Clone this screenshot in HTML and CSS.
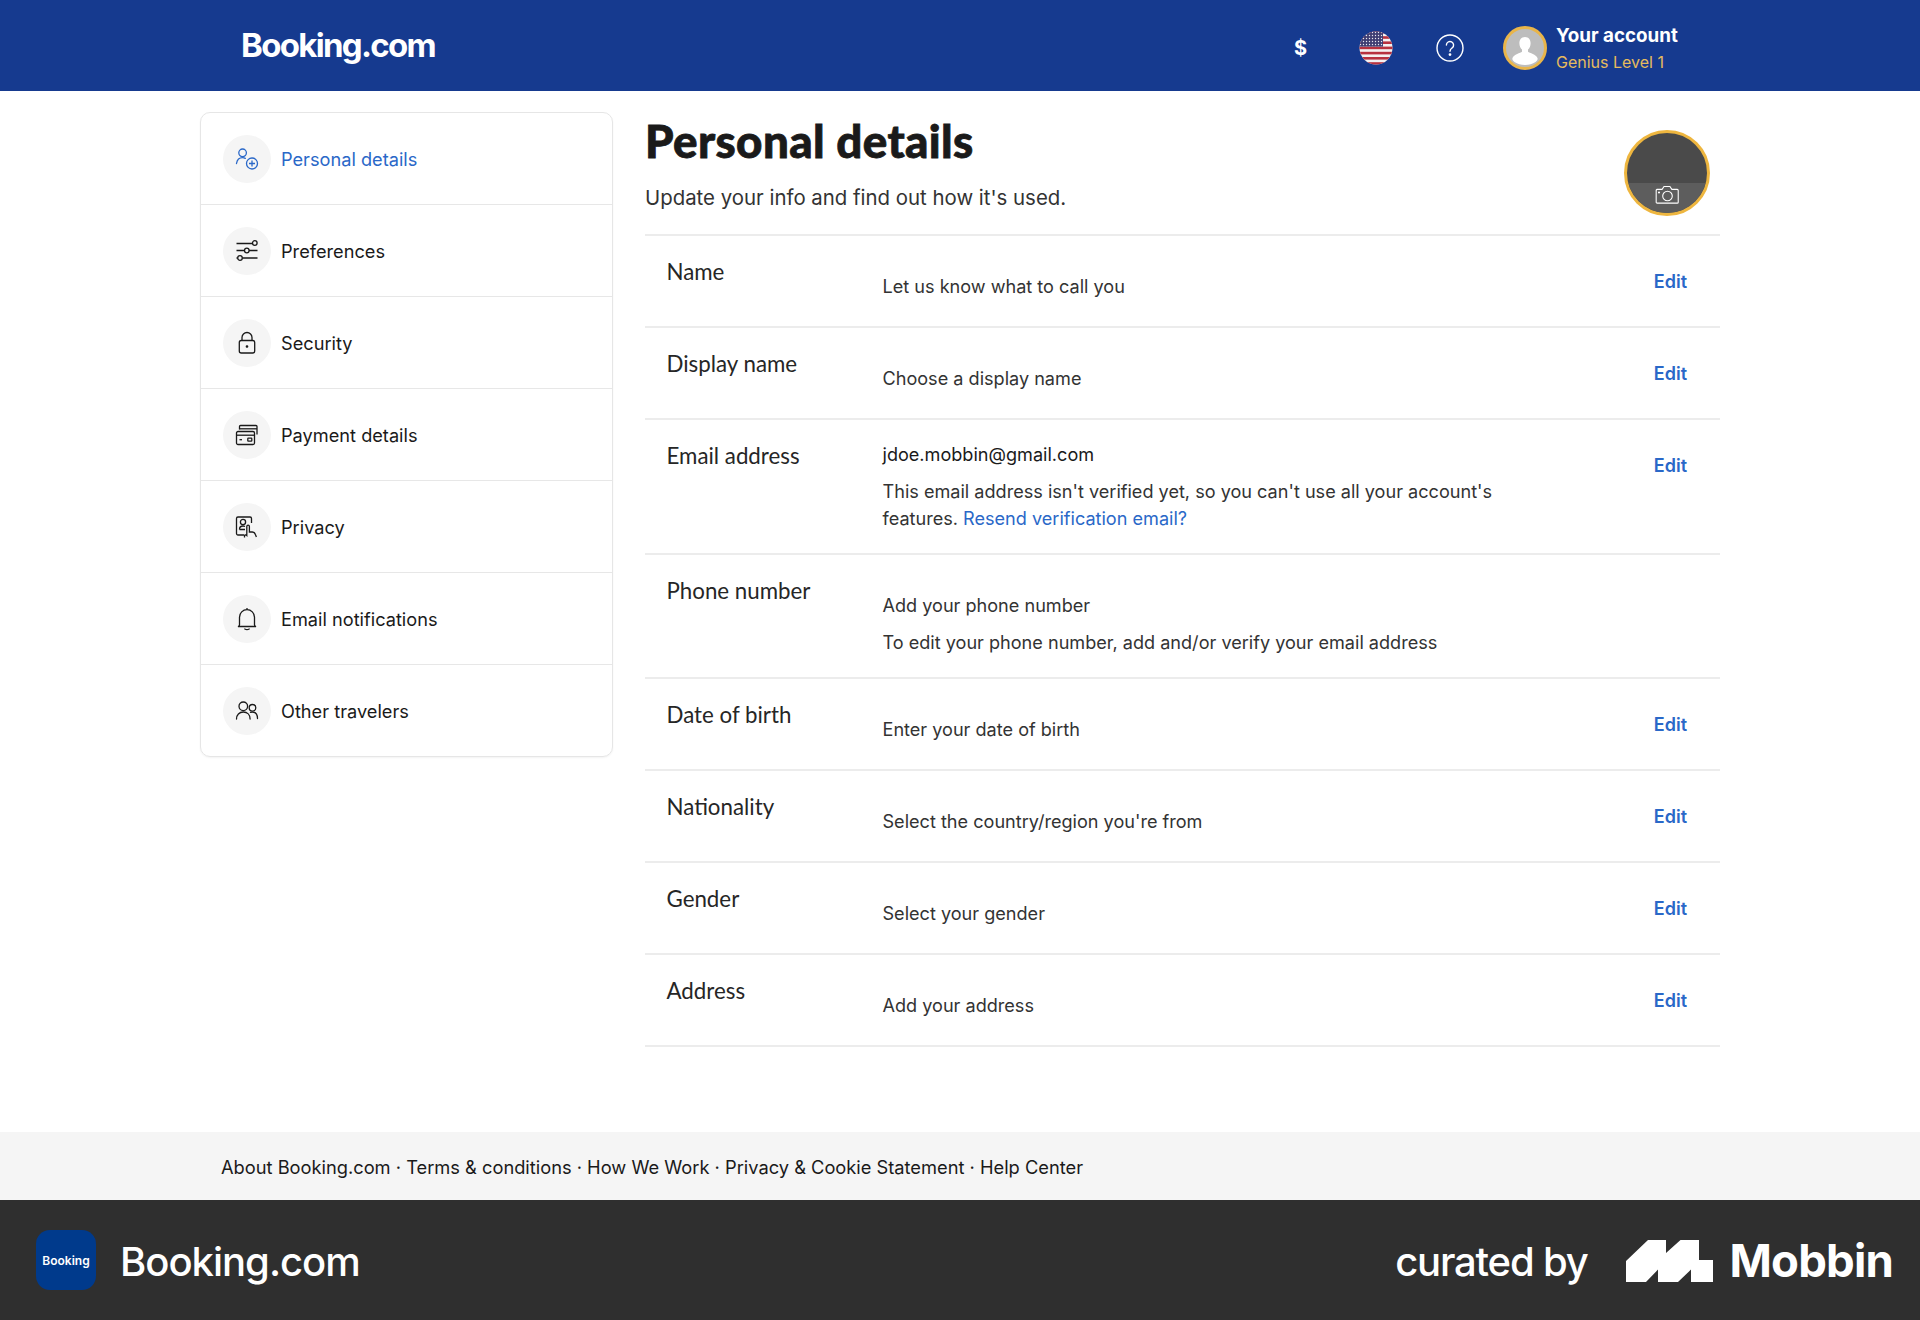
FILE: index.html
```html
<!DOCTYPE html>
<html lang="en">

<head>
    <meta charset="UTF-8">
    <title>Personal details</title>
    <link rel="stylesheet" href="styles.css">
</head>

<body>

<header class="top-bar">
    <div class="page top-inner">
        <a class="logo">Booking.com</a>
        <div class="top-actions">
            <span class="top-item currency">$</span>
            <span class="top-item">
                <svg class="flag" width="34" height="34" viewBox="0 0 34 34">
                    <defs>
                        <clipPath id="flagClip"><circle cx="17" cy="17" r="16.5"/></clipPath>
                        <pattern id="stars" width="3" height="3" patternUnits="userSpaceOnUse">
                            <circle cx="1.5" cy="1.5" r=".7" fill="#e8e8f0"/>
                        </pattern>
                    </defs>
                    <g clip-path="url(#flagClip)">
                        <rect width="34" height="34" fill="#f4f1f1"/>
                        <rect y="0" width="34" height="2.6" fill="#b8323f"/>
                        <rect y="5.2" width="34" height="2.6" fill="#b8323f"/>
                        <rect y="10.4" width="34" height="2.6" fill="#b8323f"/>
                        <rect y="15.6" width="34" height="2.6" fill="#b8323f"/>
                        <rect y="20.8" width="34" height="2.6" fill="#b8323f"/>
                        <rect y="26" width="34" height="2.6" fill="#b8323f"/>
                        <rect y="31.2" width="34" height="2.8" fill="#b8323f"/>
                        <rect width="24" height="15.6" fill="#3f3e72"/>
                        <rect width="24" height="15.6" fill="url(#stars)"/>
                    </g>
                </svg>
            </span>
            <span class="top-item help">
                <svg width="28" height="28" viewBox="0 0 28 28" fill="none" stroke="#fff" stroke-width="1.4">
                    <circle cx="14" cy="14" r="13"/>
                    <path d="M10.4 11a3.6 3.6 0 1 1 5.8 2.9c-1.300 1-2.200 1.600-2.200 3.300" stroke-linecap="round"/>
                    <circle cx="14" cy="20.600" r=".7" fill="#fff"/>
                </svg>
            </span>
            <div class="account">
                <span class="account-pic">
                    <svg width="38" height="38" viewBox="0 0 38 38">
                        <path fill="#fff" d="M19 8c-3.700 0-5.600 2.800-5.600 6.200 0 2.600 1.100 5 2.600 6.300v2.200c-1.500 1.400-8.300 2.500-9.500 6.300-.5 1.600.5 3 2 4 3 2 6.500 3 10.500 3s7.500-1 10.500-3c1.500-1 2.500-2.400 2-4-1.200-3.800-8-4.900-9.500-6.300v-2.200c1.500-1.300 2.600-3.700 2.600-6.300C24.600 10.800 22.700 8 19 8z"/>
                    </svg>
                </span>
                <div class="account-text">
                    <div class="account-name">Your account</div>
                    <div class="account-level">Genius Level 1</div>
                </div>
            </div>
        </div>
    </div>
</header>

<div class="page content">
    <nav class="side-nav">
        <a class="side-item active">
            <span class="side-icon">
                <svg width="24" height="24" viewBox="0 0 24 24" fill="none" stroke="#2a68c8" stroke-width="1.3">
                    <circle cx="7.600" cy="5.800" r="3.800"/>
                    <path d="M1.500 16.500c.6-3.500 3-5.800 6.100-5.800 1 0 1.900.2 2.700.7" stroke-linecap="round"/>
                    <circle cx="17" cy="16.500" r="5.500"/>
                    <path d="M17 13.500v6M14 16.500h6"/>
                </svg>
            </span>
            Personal details
        </a>
        <a class="side-item">
            <span class="side-icon">
                <svg width="24" height="24" viewBox="0 0 24 24" fill="none" stroke="#1a1a1a" stroke-width="1.3">
                    <path d="M1.500 4.500h16.500M1.500 11.500h8M14 11.500h8.500M7.500 19h15M1.500 19h1"/>
                    <circle cx="19.800" cy="4" r="2.300"/>
                    <circle cx="11.800" cy="11.500" r="2.300"/>
                    <circle cx="5" cy="19" r="2.300"/>
                </svg>
            </span>
            Preferences
        </a>
        <a class="side-item">
            <span class="side-icon">
                <svg width="24" height="24" viewBox="0 0 24 24" fill="none" stroke="#1a1a1a" stroke-width="1.3">
                    <rect x="4.300" y="9.500" width="15.400" height="12.500" rx="2"/>
                    <path d="M7 9.500V6.500a5 5 0 0 1 10 0v3"/>
                    <circle cx="12" cy="15.500" r=".7" fill="#1a1a1a"/>
                </svg>
            </span>
            Security
        </a>
        <a class="side-item">
            <span class="side-icon">
                <svg width="24" height="24" viewBox="0 0 24 24" fill="none" stroke="#1a1a1a" stroke-width="1.3">
                    <path d="M4.500 6.500V3.500a1 1 0 0 1 1-1h15.500a1 1 0 0 1 1 1v8"/>
                    <path d="M4.500 5.800h17.500"/>
                    <rect x="1.500" y="8.500" width="18" height="13" rx="1.500"/>
                    <path d="M1.500 12.200h18"/>
                    <rect x="12.800" y="15.200" width="4" height="3" rx=".5"/>
                    <path d="M4.500 16.700h2.500"/>
                </svg>
            </span>
            Payment details
        </a>
        <a class="side-item">
            <span class="side-icon">
                <svg width="24" height="24" viewBox="0 0 24 24" fill="none" stroke="#1a1a1a" stroke-width="1.3">
                    <path d="M9 20H3a1.500 1.500 0 0 1-1.500-1.500V3.500A1.500 1.500 0 0 1 3 2h12a1.500 1.500 0 0 1 1.500 1.500V8"/>
                    <circle cx="8" cy="7" r="2.600"/>
                    <path d="M4.500 14.500c0-2.200 1.500-3.500 3.500-3.500 .8 0 1.500.2 2 .5M4.500 14.500h5.500"/>
                    <path d="M9.500 22.500v-1.500c0-1 1.300-1.500 2.300-.5V11.500a1.300 1.300 0 0 1 2.600 0v5.500h3c1.500 0 2.500 1 3 2.500l1 2.500"/>
                </svg>
            </span>
            Privacy
        </a>
        <a class="side-item">
            <span class="side-icon">
                <svg width="24" height="24" viewBox="0 0 24 24" fill="none" stroke="#1a1a1a" stroke-width="1.3">
                    <path d="M12 1v2.200M4.500 18v-7.800a7.500 7.500 0 0 1 15 0V18c0 .5 1 1.300 1.500 1.500H3c.5-.2 1.500-1 1.500-1.500z"/>
                    <path d="M9.800 22c1.400.8 3 .8 4.400 0" stroke-linecap="round"/>
                </svg>
            </span>
            Email notifications
        </a>
        <a class="side-item">
            <span class="side-icon">
                <svg width="24" height="24" viewBox="0 0 24 24" fill="none" stroke="#1a1a1a" stroke-width="1.3">
                    <circle cx="8.300" cy="7.300" r="4.300"/>
                    <circle cx="17.500" cy="8.800" r="3.300"/>
                    <path d="M1.500 20c0-4.200 2.800-7 6.800-7s6.800 2.800 6.800 7" stroke-linecap="round"/>
                    <path d="M15.500 13.400c.6-.2 1.300-.3 2-.3 2.700 0 4.900 2.300 5 6.400" stroke-linecap="round"/>
                </svg>
            </span>
            Other travelers
        </a>
    </nav>

    <main class="details">
        <div class="details-head">
            <div>
                <h1>Personal details</h1>
                <p class="intro">Update your info and find out how it's used.</p>
            </div>
            <div class="big-pic">
                <span class="big-pic-strip">
                    <svg width="24" height="20" viewBox="0 0 24 20" fill="none" stroke="#fff" stroke-width="1.100">
                        <path d="M1.500 4.500h5.500l2-3h6l2 3h5.500a1 1 0 0 1 1 1v12a1 1 0 0 1-1 1h-20.500a1 1 0 0 1-1-1v-12a1 1 0 0 1 1-1z" transform="translate(.2 0) scale(.98)"/>
                        <circle cx="12.500" cy="11" r="4.800"/>
                        <circle cx="4" cy="7.500" r=".5" fill="#fff"/>
                    </svg>
                </span>
            </div>
        </div>

        <div class="info-row">
            <div class="info-label">Name</div>
            <div class="info-value"><p class="empty">Let us know what to call you</p></div>
            <a class="edit">Edit</a>
        </div>
        <div class="info-row">
            <div class="info-label">Display name</div>
            <div class="info-value"><p class="empty">Choose a display name</p></div>
            <a class="edit">Edit</a>
        </div>
        <div class="info-row">
            <div class="info-label">Email address</div>
            <div class="info-value">
                <p class="filled">jdoe.mobbin@gmail.com</p>
                <p class="note">This email address isn't verified yet, so you can't use all your account's features. <a class="link">Resend verification email?</a></p>
            </div>
            <a class="edit">Edit</a>
        </div>
        <div class="info-row">
            <div class="info-label">Phone number</div>
            <div class="info-value">
                <p class="empty">Add your phone number</p>
                <p class="note">To edit your phone number, add and/or verify your email address</p>
            </div>
        </div>
        <div class="info-row">
            <div class="info-label">Date of birth</div>
            <div class="info-value"><p class="empty">Enter your date of birth</p></div>
            <a class="edit">Edit</a>
        </div>
        <div class="info-row">
            <div class="info-label">Nationality</div>
            <div class="info-value"><p class="empty">Select the country/region you're from</p></div>
            <a class="edit">Edit</a>
        </div>
        <div class="info-row">
            <div class="info-label">Gender</div>
            <div class="info-value"><p class="empty">Select your gender</p></div>
            <a class="edit">Edit</a>
        </div>
        <div class="info-row">
            <div class="info-label">Address</div>
            <div class="info-value"><p class="empty">Add your address</p></div>
            <a class="edit">Edit</a>
        </div>
    </main>
</div>

<footer class="foot-links">
    <div class="page foot-links-inner">About Booking.com · Terms &amp; conditions · How We Work · Privacy &amp; Cookie Statement · Help Center</div>
</footer>

<div class="credit">
    <div class="credit-app">
        <span class="app-icon">Booking</span>
        <span class="app-name">Booking.com</span>
    </div>
    <div class="credit-by">
        <span class="curated">curated by</span>
        <svg class="mobbin-mark" width="87" height="42" viewBox="0 0 87 44" preserveAspectRatio="none">
            <path fill="#fff" d="M0 22L22 0H40V13.500L54.500 0H73V21H87V44H65V31L52 44H32V31L20 44H0Z"/>
        </svg>
        <span class="mobbin">Mobbin</span>
    </div>
</div>

</body>
</html>
```

FILE: styles.css
```css
* {
    box-sizing: border-box;
}

body {
    font-family: Inter, "Liberation Sans", sans-serif;
    background-color: #fff;
    color: #1a1a1a;
    margin: 0;
    height: 1320px;
    display: flex;
    flex-direction: column;
}

p, h1 {
    margin: 0;
}

.page {
    width: 1520px;
    margin: 0 auto;
}

/* top bar */
.top-bar {
    background-color: #163a8f;
    height: 91px;
    flex: none;
}

.top-inner {
    height: 100%;
    display: flex;
    align-items: center;
    justify-content: space-between;
    padding-left: 41px;
}

.logo {
    color: #fff;
    font-size: 33px;
    font-weight: 700;
    letter-spacing: -1.7px;
    margin-top: -1px;
}

.top-actions {
    display: flex;
    align-items: center;
    margin-top: 5px;
}

.top-item {
    width: 75px;
    display: flex;
    justify-content: center;
    align-items: center;
}

.help {
    padding-right: 1px;
}

.currency {
    color: #fff;
    font-size: 20px;
    font-weight: 700;
}

.account {
    display: flex;
    align-items: center;
    gap: 9px;
    width: 217px;
    margin-left: 15px;
}

.account-pic {
    width: 44px;
    height: 44px;
    border: 3px solid #e9b54a;
    border-radius: 50%;
    background-color: #bdbdbd;
    overflow: hidden;
    flex: none;
}

.account-pic svg {
    display: block;
}

.account-text {
    margin-top: 1px;
}

.account-name {
    color: #fff;
    font-size: 18.8px;
    font-weight: 700;
    line-height: 24px;
}

.account-level {
    color: #e6bb5d;
    font-size: 16px;
    line-height: 24px;
    margin-top: 2px;
}

/* content */
.content {
    flex: 1;
    display: flex;
    gap: 32px;
    padding-top: 21px;
}

.side-nav {
    width: 413px;
    height: 645px;
    border: 1px solid #e6e6e6;
    border-radius: 10px;
    flex: none;
    box-shadow: 0 1px 2px rgba(0, 0, 0, 0.05);
}

.side-item {
    height: 92px;
    display: flex;
    align-items: center;
    gap: 10px;
    padding-left: 22px;
    font-size: 18.2px;
    border-bottom: 1px solid #e7e7e7;
}

.side-item:last-child {
    border-bottom: none;
    padding-bottom: 1px;
}

.side-item.active {
    color: #2a68c8;
}

.side-icon {
    width: 48px;
    height: 48px;
    border-radius: 50%;
    background-color: #f5f5f5;
    display: flex;
    align-items: center;
    justify-content: center;
}

.details {
    flex: 1;
}

.details-head {
    height: 124px;
    display: flex;
    justify-content: space-between;
    border-bottom: 2px solid #ececec;
}

h1 {
    font-family: Lato, sans-serif;
    font-size: 45.7px;
    font-weight: 900;
    line-height: 48px;
    margin-top: 5px;
    letter-spacing: 0.4px;
    -webkit-text-stroke: 0.8px #1a1a1a;
}

.intro {
    font-size: 20.4px;
    line-height: 28px;
    margin-top: 19px;
    color: #333;
}

.big-pic {
    width: 86px;
    height: 86px;
    margin: 18px 10px 0 0;
    border: 3px solid #eeb63f;
    border-radius: 50%;
    background-color: #4a4a4a;
    overflow: hidden;
    display: flex;
    align-items: flex-end;
}

.big-pic-strip {
    width: 100%;
    height: 30px;
    background-color: #5d5d5d;
    display: flex;
    justify-content: center;
    padding-top: 2px;
}

.info-row {
    min-height: 92px;
    display: grid;
    grid-template-columns: 216px 632px 1fr;
    padding: 21px 33px 21px 21.5px;
    border-bottom: 2px solid #ececec;
}

.info-label {
    font-family: Lato, sans-serif;
    font-size: 22.3px;
    line-height: 28px;
    padding-top: 1px;
    color: #262626;
}

.info-value {
    font-size: 18.1px;
    line-height: 27px;
    color: #333;
}

.empty {
    padding-top: 16px;
}

.filled {
    color: #1a1a1a;
}

.note {
    margin-top: 10px;
}

.link {
    color: #2a68c8;
}

.edit {
    grid-column: 3;
    justify-self: end;
    color: #2a68c8;
    font-size: 18px;
    font-weight: 600;
    line-height: 27px;
    padding-top: 11px;
}

/* footer */
.foot-links {
    height: 68px;
    flex: none;
    background-color: #f5f5f5;
}

.foot-links-inner {
    padding-left: 21px;
    font-size: 18.27px;
    line-height: 70px;
}

.credit {
    height: 120px;
    flex: none;
    background-color: #2f2f2f;
    color: #fff;
    display: flex;
    justify-content: space-between;
    align-items: center;
    padding: 0 27px 0 36px;
}

.credit-app, .credit-by {
    display: flex;
    align-items: center;
}

.credit-by {
    padding-top: 2px;
}

.app-icon {
    width: 60px;
    height: 60px;
    border-radius: 14px;
    background-color: #003a8c;
    font-size: 12px;
    font-weight: 600;
    display: flex;
    align-items: center;
    justify-content: center;
}

.app-name {
    font-size: 40px;
    font-weight: 500;
    letter-spacing: -1px;
    margin-left: 24px;
    padding-top: 2px;
}

.curated {
    font-size: 40px;
    font-weight: 500;
    letter-spacing: -1.2px;
    margin-right: 39px;
}

.mobbin {
    font-size: 45.5px;
    font-weight: 700;
    letter-spacing: -0.8px;
    margin-left: 16px;
    margin-top: -2px;
}
```
